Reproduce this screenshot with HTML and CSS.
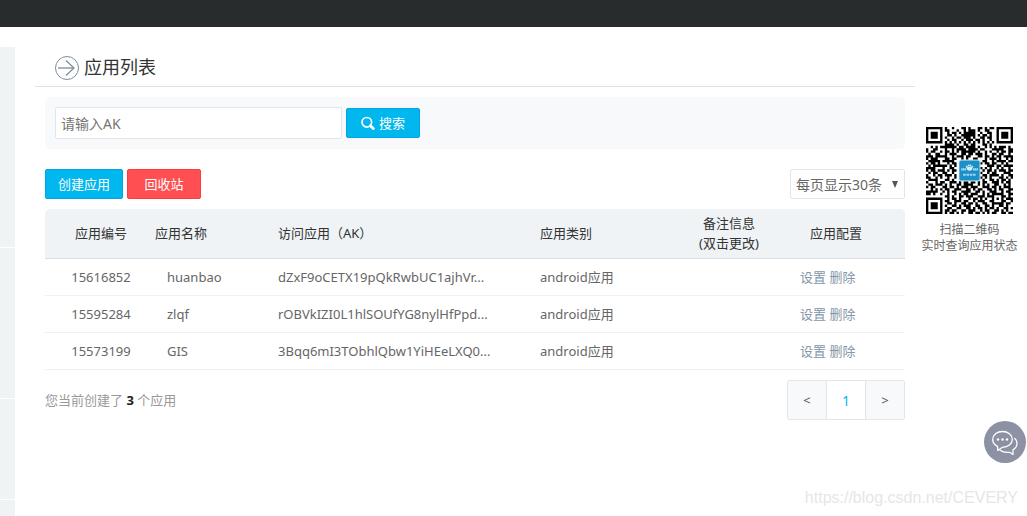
FILE: index.html
```
<!DOCTYPE html>
<html lang="zh-CN">
<head>
  <meta charset="UTF-8">
  <meta name="viewport" content="width=device-width, initial-scale=1.0">
  <title>应用列表</title>
  <link rel="stylesheet" href="styles.css">
</head>
<body>
  <header class="topbar"></header>
  <div class="page">
    <nav class="sidebar">
      <div class="side-block side-large"></div>
      <div class="side-block side-medium"></div>
      <div class="side-block side-small"></div>
      <div class="side-block side-rest"></div>
    </nav>

    <main class="content">
      <div class="title">
        <svg class="title-icon" viewBox="0 0 24 24" fill="none" stroke="#7d8b99">
          <circle cx="12" cy="12" r="11.5"/>
          <path d="M3 12h15" stroke="#a9b3bd" stroke-width="2"/>
          <path d="M11 4.5l8 7.5l-8 7.5" stroke-width="1.2"/>
        </svg>
        <h1>应用列表</h1>
      </div>

      <div class="panel">
        <form class="search">
          <input type="text" name="ak" placeholder="请输入AK" aria-label="请输入AK">
          <button type="button" class="btn btn-blue">
            <svg class="search-icon" viewBox="0 0 14 14" fill="none" stroke="#fff">
              <circle cx="5.8" cy="6.3" r="4.8" stroke-width="1.7"/>
              <path d="M9.3 9.8l3 2.8" stroke-width="2.8" stroke-linecap="round"/>
            </svg>
            搜索
          </button>
        </form>

        <div class="toolbar">
          <button type="button" class="btn btn-blue btn-create">创建应用</button>
          <button type="button" class="btn btn-red">回收站</button>
          <div class="page-size">
            <select name="pageSize" aria-label="每页显示">
              <option selected>每页显示30条</option>
              <option>每页显示50条</option>
            </select>
            <svg class="caret" viewBox="0 0 6 7"><path d="M0 0h6l-3 7z" fill="#555"/></svg>
          </div>
        </div>

        <table class="apps">
          <colgroup>
            <col class="col-id">
            <col class="col-name">
            <col>
            <col class="col-type">
            <col class="col-note">
            <col class="col-action">
          </colgroup>
          <thead>
            <tr>
              <th class="id">应用编号</th>
              <th>应用名称</th>
              <th>访问应用（AK）</th>
              <th>应用类别</th>
              <th class="note">备注信息<br>(双击更改)</th>
              <th class="action">应用配置</th>
            </tr>
          </thead>
          <tbody>
            <tr>
              <td class="id">15616852</td>
              <td class="name">huanbao</td>
              <td class="ak">dZxF9oCETX19pQkRwbUC1ajhVr...</td>
              <td>android应用</td>
              <td class="note"></td>
              <td class="action"><a href="#">设置</a> <a href="#">删除</a></td>
            </tr>
            <tr>
              <td class="id">15595284</td>
              <td class="name">zlqf</td>
              <td class="ak">rOBVkIZI0L1hlSOUfYG8nylHfPpd...</td>
              <td>android应用</td>
              <td class="note"></td>
              <td class="action"><a href="#">设置</a> <a href="#">删除</a></td>
            </tr>
            <tr>
              <td class="id">15573199</td>
              <td class="name">GIS</td>
              <td class="ak">3Bqq6mI3TObhlQbw1YiHEeLXQ0...</td>
              <td>android应用</td>
              <td class="note"></td>
              <td class="action"><a href="#">设置</a> <a href="#">删除</a></td>
            </tr>
          </tbody>
        </table>

        <div class="bottom">
          <p class="total">您当前创建了 <strong>3</strong> 个应用</p>
          <div class="pager">
            <button type="button">&lt;</button>
            <button type="button" class="current">1</button>
            <button type="button">&gt;</button>
          </div>
        </div>
      </div>
    </main>

    <aside class="qr">
      <svg class="qr-code" viewBox="0 0 37 37">
        <path id="qrModules" fill="#000"/>
        <rect x="13.8" y="13.8" width="9.4" height="9.4" rx="1" fill="#d8ecf5"/>
        <rect x="14.2" y="14.2" width="8.6" height="8.6" rx="0.7" fill="#1b8fc8"/>
        <g fill="#d5edf8">
          <ellipse cx="18.5" cy="17.7" rx="1.2" ry="0.9"/>
          <circle cx="17.3" cy="16.9" r="0.4"/>
          <circle cx="18.1" cy="16.3" r="0.4"/>
          <circle cx="18.9" cy="16.3" r="0.4"/>
          <circle cx="19.7" cy="16.9" r="0.4"/>
        </g>
        <path d="M15 18h2M20 18h2.2" stroke="#b5def0" stroke-width="0.9" stroke-dasharray="0.6 0.15"/>
        <path d="M15.8 20.3h5.4" stroke="#a5d5ec" stroke-width="0.8" stroke-dasharray="1.1 0.3"/>
      </svg>
      <p>扫描二维码<br>实时查询应用状态</p>
    </aside>
  </div>

  <button type="button" class="chat" aria-label="在线咨询">
    <svg viewBox="0 0 42 42" fill="none" stroke="#fff" stroke-width="1.3" stroke-linejoin="round">
      <path d="M13.5 25.3C10.500 23.800 8.700 21.500 8.700 18.500C8.700 14 13 10.500 18.500 10.500S28.300 14 28.300 18.500S24 26.300 18.500 26.300L13.800 29.500z"/>
      <path d="M30.500 17C32.200 18.600 33 20.500 33 22.500C33 25 31.500 27.200 29 28.800V33.500L25.500 31.300C21.500 31.600 18 30.800 15.800 29"/>
      <g fill="#fff" stroke="none">
        <circle cx="14" cy="18.500" r="1.200"/>
        <circle cx="18.500" cy="18.500" r="1.200"/>
        <circle cx="23" cy="18.500" r="1.200"/>
      </g>
    </svg>
  </button>
  <div class="watermark">https://blog.csdn.net/CEVERY</div>

  <script>
    // one string per row, # is a dark module
    const rows = [
      '#######.#..#...##.#...##.#.##.#######',
      '#.....#.##...#..#.###.#..##...#.....#',
      '#.###.#..#.##.#.#####..#..##..#.###.#',
      '#.###.#..##.#..######.#.##.#..#.###.#',
      '#.###.#.#..#.##.###.#..##.##..#.###.#',
      '#.....#..#.##..#.###.##.#..#..#.....#',
      '#######.#.#.#.#.#.#.#.#.#.#.#.#######',
      '........####.#..##.##...##.#.........',
      '..#.#.#######.##.####.#..#.#.#.###.#.',
      '#..##...#..#.####.####.##...#####..##',
      '#.##..#.##.#.#.######.#..#.#..#.##.##',
      '.#..##..#.###..##.##.###.#..##.##..#.',
      '###.#####..#.###.##...##.##.#.##.####',
      '#.###...##.##..#.#..##...#.###.#..#.#',
      '.#####.#####..........#.##..#.####.##',
      '#.##.#...#.##.........##.##.##..#.#..',
      '.#.######.#.#.........#...###.##.####',
      '####...#..##..........##.#.#..#.#..#.',
      '#.##.###.#.##.........#.#.##.#.###.##',
      '.#.##..##..#..........##..#.##...###.',
      '#..#.##.###.#.........#.##.####.#..##',
      '##..#.#..#..#.........##.#.#...##.#.#',
      '.####...##.#..........#.#..##.#.##.#.',
      '#...#.##..###.#.##.##.#.##..###.#.##.',
      '.##.###.#.#..##.####..#.#.#..##..#.#.',
      '#.##...##.##.#.###.###..###.##.#.###.',
      '..#.#.#.##..###..##.#.##..##.#.##..##',
      '#####..#.#.##..####..##.#..###..#.##.',
      '##.#..#..#..#.#.##.###..#.#.#####..##',
      '........##.#..##.###..###.###...##.#.',
      '#######..#.##.#...#.##.#.#..#.#.#.###',
      '#.....#.##..###.##..#.###..##...##..#',
      '#.###.#..##.#..##.##.#..##..#####.##.',
      '#.###.#.#..##.#.###..##..##.#..##.#..',
      '#.###.#..##..##..##.#.##.#.##.#..##.#',
      '#.....#.##.##..##.###..#.##..##.#.#..',
      '#######.#.##.#.#..##.##.#.#.##..##.##'
    ];
    let d = '';
    rows.forEach((row, y) => {
      // join neighbouring modules so that no seams show
      for (const run of row.matchAll(/#+/g)) {
        d += `M${run.index} ${y}h${run[0].length}v1h-${run[0].length}z`;
      }
    });
    document.getElementById('qrModules').setAttribute('d', d);
  </script>
</body>
</html>
```
FILE: styles.css
```
* {
  box-sizing: border-box;
}

body {
  margin: 0;
  min-height: 100vh;
  display: flex;
  flex-direction: column;
  position: relative;
  background-color: #fff;
  color: #666;
  font-family: "Noto Sans", "Noto Sans CJK SC", sans-serif;
  font-size: 13px;
  line-height: 20px;
}

h1, p {
  margin: 0;
}

button, input, select {
  font-family: inherit;
}

.topbar {
  height: 27px;
  background-color: #282c2d;
}

.page {
  flex: 1;
  display: flex;
  padding: 20px 3px 0 0;
}

.sidebar {
  width: 15px;
  margin-right: 20px;
  display: flex;
  flex-direction: column;
  gap: 1px;
}

.side-block {
  background-color: #eff3f4;
}

.side-large {
  height: 200px;
}

.side-medium {
  height: 150px;
}

.side-small {
  height: 100px;
}

.side-rest {
  flex: 1;
}

.content {
  flex: 1;
  min-width: 0;
}

.title {
  display: flex;
  align-items: center;
  gap: 5px;
  height: 40px;
  padding-left: 20px;
  border-bottom: 1px solid #dfe1e3;
}

.title-icon {
  width: 24px;
  height: 24px;
  margin-top: 2px;
}

h1 {
  color: #333;
  font-size: 18px;
  font-weight: normal;
  line-height: 24px;
}

.panel {
  padding: 10px;
}

.search {
  display: flex;
  align-items: center;
  gap: 4px;
  padding: 10px;
  background-color: #f8f9fb;
  border-radius: 5px;
}

.search input {
  width: 287px;
  height: 32px;
  padding: 0 5px;
  border: 1px solid #e1e6eb;
  border-radius: 2px;
  color: #666;
  font-size: 14px;
}

.search input::placeholder {
  color: #757575;
}

.btn {
  display: flex;
  align-items: center;
  justify-content: center;
  gap: 4px;
  width: 74px;
  height: 30px;
  padding: 0 0 2px;
  border: 1px solid;
  border-radius: 2px;
  color: #fff;
  font-size: 13px;
  cursor: pointer;
}

.btn-blue {
  background-color: #00b7ee;
  border-color: #00a3e4;
}

.btn-red {
  background-color: #ff4f53;
  border-color: #ff383d;
}

.btn-create {
  width: 78px;
}

.search-icon {
  width: 14px;
  height: 14px;
  margin-top: 2px;
}

.toolbar {
  display: flex;
  gap: 4px;
  margin: 20px 0 10px;
}

.page-size {
  position: relative;
  margin-left: auto;
}

.page-size select {
  width: 115px;
  height: 30px;
  padding: 0 5px;
  appearance: none;
  background-color: #fff;
  border: 1px solid #e1e6eb;
  border-radius: 2px;
  color: #666;
  font-size: 14px;
}

.caret {
  position: absolute;
  top: 12px;
  right: 7px;
  width: 6px;
  height: 7px;
  pointer-events: none;
}

.apps {
  width: 100%;
  table-layout: fixed;
  border-collapse: separate;
  border-spacing: 0;
}

.col-id {
  width: 100px;
}

.col-name {
  width: 123px;
}

.col-type {
  width: 140px;
}

.col-note {
  width: 118px;
}

.col-action {
  width: 117px;
}

.apps th {
  height: 50px;
  padding: 0 0 2px 10px;
  background-color: #eff3f6;
  border-bottom: 1px solid #d9dfe4;
  color: #333;
  font-weight: normal;
  text-align: left;
}

.apps th:first-child {
  border-top-left-radius: 5px;
}

.apps th:last-child {
  border-top-right-radius: 5px;
}

.apps td {
  height: 37px;
  padding: 0 0 0 10px;
  border-bottom: 1px solid #eff1f3;
}

.apps .id {
  padding-left: 12px;
  text-align: center;
}

.apps .name {
  padding-left: 22px;
}

.apps .ak {
  overflow: hidden;
  white-space: nowrap;
  text-overflow: ellipsis;
}

.apps .note {
  padding-left: 0;
  text-align: center;
}

.apps td.action {
  padding-left: 12px;
}

.apps th.action {
  padding-left: 22px;
}

.apps a {
  color: #8496a8;
  text-decoration: none;
}

.bottom {
  display: flex;
  align-items: center;
  justify-content: space-between;
  margin-top: 10px;
}

.total {
  color: #999;
}

.total strong {
  color: #222;
}

.pager {
  display: flex;
  border: 1px solid #e1e6eb;
  border-radius: 2px;
}

.pager button {
  width: 38px;
  height: 38px;
  padding: 0;
  background-color: #f8f9fb;
  border: none;
  color: #555;
  font-size: 13px;
}

.pager .current {
  width: 40px;
  background-color: #fff;
  border: solid #e1e6eb;
  border-width: 0 1px;
  color: #00b7ee;
  font-size: 14px;
}

.qr {
  width: 109px;
  padding-top: 80px;
  text-align: center;
  font-size: 12px;
  line-height: 16px;
}

.qr-code {
  display: block;
  width: 87px;
  height: 87px;
  margin: 0 auto 8px;
}

.chat {
  position: absolute;
  right: 1px;
  bottom: 53px;
  width: 42px;
  height: 42px;
  padding: 0;
  background-color: #8c92a3;
  border: none;
  border-radius: 50%;
}

.chat svg {
  display: block;
}

.watermark {
  position: absolute;
  right: 9px;
  bottom: 8px;
  color: #e6e6e6;
  font-family: "Liberation Sans", Arial, sans-serif;
  font-size: 16px;
}
```
